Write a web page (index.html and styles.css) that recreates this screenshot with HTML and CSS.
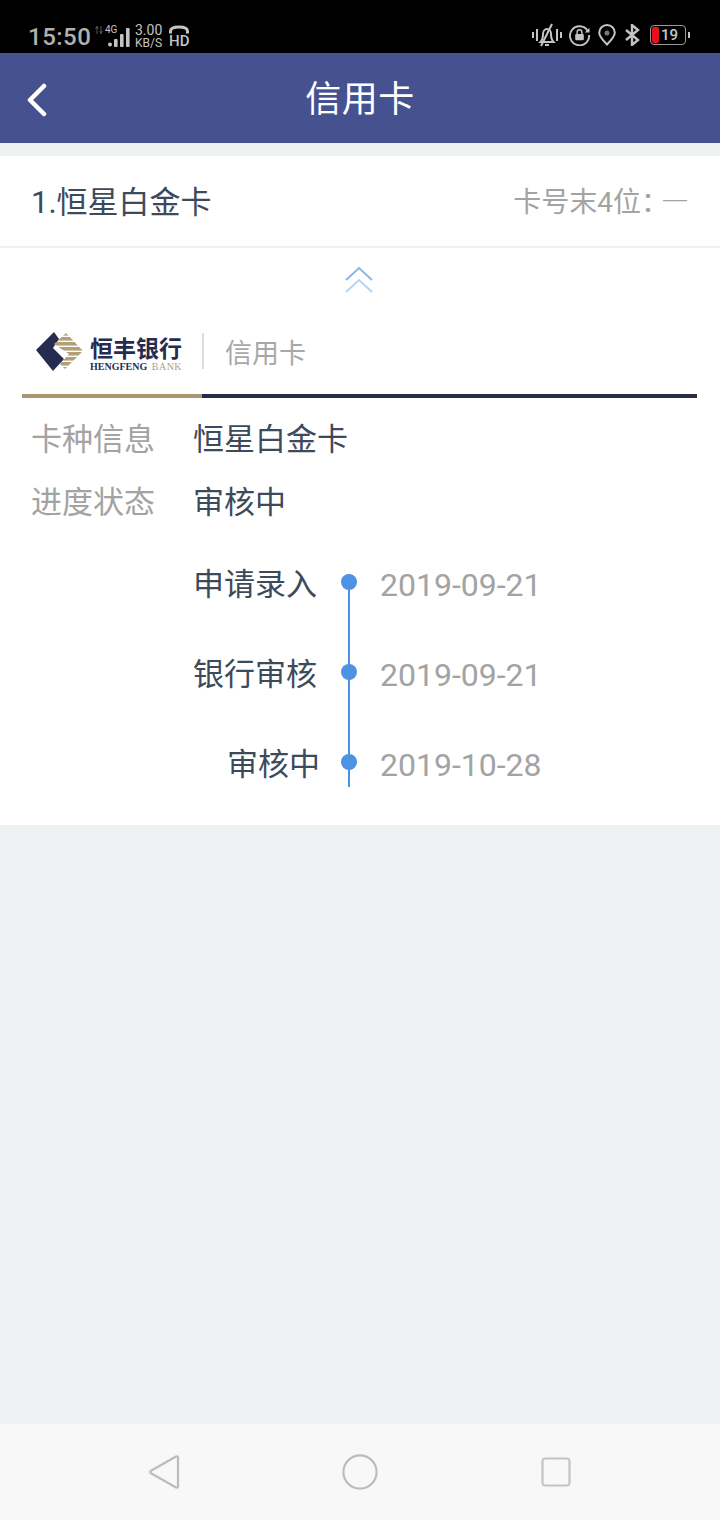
FILE: index.html
```html
<!DOCTYPE html>
<html lang="zh-CN">
<head>
  <meta charset="UTF-8" />
  <title>信用卡</title>
  <link rel="stylesheet" href="styles.css">
</head>
<body>
  <div class="phone">
    <div class="statusbar">
      <div class="status-left">
        <span class="clock">15:50</span>
        <svg class="ic-hold" width="8" height="10" viewBox="0 0 8 10"><path d="M2 1v8M6 1v8M0.5 4L2 1.5 3.5 4M4.5 6L6 8.5 7.5 6" fill="none" stroke="#555" stroke-width="1"/></svg>
        <span class="signal">
          <span class="net">4G</span>
          <svg width="22" height="19" viewBox="0 0 22 19"><g fill="#c4c4c4"><circle cx="2" cy="16.5" r="2"/><rect x="6" y="11" width="3.6" height="8" rx="1"/><rect x="12" y="6" width="3.6" height="13" rx="1"/><rect x="18" y="0" width="3.6" height="19" rx="1"/></g></svg>
        </span>
        <span class="speed"><b>3.00</b><i>KB/S</i></span>
        <span class="hd">
          <svg width="20" height="10" viewBox="0 0 20 10"><path d="M1.5 8.500V6.200C1.500 3.400 5 2 10 2s8.500 1.400 8.500 4.200V8.500" fill="none" stroke="#c4c4c4" stroke-width="3"/></svg>
          <span class="hd-text">HD</span>
        </span>
      </div>
      <div class="status-right">
        <svg class="ic-bell" width="30" height="24" viewBox="0 0 30 24"><g fill="none" stroke="#c4c4c4" stroke-width="2"><path d="M1 9v6M5 6v12M25 6v12M29 9v6"/><path d="M8.500 19c2-2 2.500-4 2.500-8 0-3 2-5 4-5s4 2 4 5c0 4 .5 6 2.500 8z"/><path d="M13 22h4M9 23L20 1"/></g></svg>
        <svg width="21" height="22" viewBox="0 0 22 22"><path d="M19.500 6.500A10 10 0 1 0 21 11" fill="none" stroke="#c4c4c4" stroke-width="2"/><path d="M21.500 3.500v5h-5z" fill="#c4c4c4"/><rect x="6.500" y="10" width="9" height="6.500" rx="1" fill="#c4c4c4"/><path d="M8.500 10V8a2.500 2.500 0 0 1 5 0v2" fill="none" stroke="#c4c4c4" stroke-width="1.500"/></svg>
        <svg width="18" height="22" viewBox="0 0 18 22"><path d="M9 20.500C4 15.500 1.200 12.500 1.200 8.800a7.800 7.800 0 0 1 15.600 0c0 3.700-2.800 6.700-7.800 11.700z" fill="none" stroke="#c4c4c4" stroke-width="2"/><circle cx="9" cy="9" r="2.500" fill="#777"/></svg>
        <svg width="17" height="22" viewBox="0 0 17 22"><path d="M2 6l12 10-6 5V1l6 5L2 16" fill="none" stroke="#c4c4c4" stroke-width="2.400"/></svg>
        <span class="battery">
          <span class="battery-level"></span>
          <span class="battery-num">19</span>
        </span>
      </div>
    </div>

    <header class="topbar">
      <svg class="back" width="22" height="34" viewBox="0 0 22 34"><path d="M19 3L5 17l14 14" fill="none" stroke="#fff" stroke-width="4.500" stroke-linecap="round" stroke-linejoin="round"/></svg>
      <h1>信用卡</h1>
    </header>

    <main class="content">
      <section class="card">
        <div class="card-head">
          <span class="card-name">1.恒星白金卡</span>
          <span class="card-no">卡号末4位：<span class="card-dash">—</span></span>
        </div>
        <div class="collapse">
          <svg width="30" height="28" viewBox="0 0 30 28"><path d="M2 14L15 2l13 12" fill="none" stroke="#8ab8e6" stroke-width="2"/><path d="M2 26l13-12 13 12" fill="none" stroke="#b5d4f1" stroke-width="2"/></svg>
        </div>
        <div class="brand">
          <svg class="brand-mark" width="48" height="39" viewBox="0 0 48 39">
            <defs>
              <pattern id="stripes" width="48" height="5" patternUnits="userSpaceOnUse">
                <rect width="48" height="3.600" fill="#b3a077"/>
              </pattern>
            </defs>
            <path d="M0 18L18 0l5 7-6 9 11 11-11 12z" fill="#252c4f"/>
            <path d="M30 1l17 18-18 18-5-5 9-10-15-10z" fill="url(#stripes)"/>
          </svg>
          <div class="brand-name">
            <strong>恒丰银行</strong>
            <small>HENGFENG <em>BANK</em></small>
          </div>
          <span class="brand-sep"></span>
          <span class="brand-type">信用卡</span>
        </div>
        <div class="rule"><span class="rule-gold"></span><span class="rule-navy"></span></div>
        <div class="info-row">
          <span class="info-key">卡种信息</span>
          <span class="info-val">恒星白金卡</span>
        </div>
        <div class="info-row">
          <span class="info-key">进度状态</span>
          <span class="info-val">审核中</span>
        </div>
        <ul class="timeline">
          <li class="step">
            <span class="step-name">申请录入</span>
            <span class="step-node"></span>
            <span class="step-date">2019-09-21</span>
          </li>
          <li class="step">
            <span class="step-name">银行审核</span>
            <span class="step-node"></span>
            <span class="step-date">2019-09-21</span>
          </li>
          <li class="step last">
            <span class="step-name">审核中</span>
            <span class="step-node"></span>
            <span class="step-date">2019-10-28</span>
          </li>
        </ul>
      </section>
    </main>

    <nav class="navbar">
      <svg width="32" height="36" viewBox="0 0 32 36"><path d="M28 2.500L3 16.800c-1 .6-1 1.800 0 2.400L28 33.500c1 .5 2 0 2-1V3.500c0-1-1-1.500-2-1z" fill="none" stroke="#bcbcbc" stroke-width="2.200"/></svg>
      <svg width="36" height="36" viewBox="0 0 36 36"><circle cx="18" cy="18" r="16.600" fill="none" stroke="#bcbcbc" stroke-width="2.200"/></svg>
      <svg class="nav-recent" width="30" height="30" viewBox="0 0 30 30"><rect x="1.500" y="1.500" width="27" height="27" rx="3" fill="none" stroke="#c4c4c4" stroke-width="2.200"/></svg>
    </nav>
  </div>
</body>
</html>
```

FILE: styles.css
```css
* {
  box-sizing: border-box;
}
body {
  margin: 0;
  font-family: Roboto, "Noto Sans CJK SC", sans-serif;
  background-color: #edf1f2;
}
.phone {
  width: 720px;
  height: 1520px;
  display: flex;
  flex-direction: column;
}

/* status bar */
.statusbar {
  height: 53px;
  background: #000;
  color: #c4c4c4;
  display: flex;
  justify-content: space-between;
  align-items: flex-end;
  padding: 0 34px 3px 28px;
}
.status-left, .status-right {
  display: flex;
  align-items: center;
}
.status-left {
  height: 26px;
}
.clock {
  font-size: 24px;
  font-weight: 500;
  letter-spacing: 0.5px;
  width: 67px;
  color: #b0b0b0;
}
.ic-hold {
  margin-top: -14px;
}
.signal {
  display: flex;
  align-items: flex-end;
  margin-left: 2px;
  height: 22px;
  margin-top: -3px;
  position: relative;
}
.net {
  font-size: 10px;
  line-height: 10px;
  align-self: flex-start;
  position: absolute;
  left: 0;
  top: 0;
}
.signal svg {
  margin-left: 3px;
}
.speed {
  display: flex;
  flex-direction: column;
  margin-left: 5px;
  font-weight: 400;
  width: 30px;
  margin-top: -1px;
}
.speed b {
  font-weight: 400;
  font-size: 14px;
  line-height: 13px;
}
.speed i {
  font-style: normal;
  font-size: 12px;
  line-height: 11px;
  margin-top: 1px;
}
.hd {
  display: flex;
  flex-direction: column;
  margin-left: 4px;
  width: 22px;
  margin-top: -2px;
}
.hd-text {
  font-size: 15px;
  line-height: 13px;
  font-weight: 500;
}
.status-right {
  gap: 8px;
  height: 30px;
}
.ic-bell {
  margin-right: -1px;
}
.battery {
  margin-left: 1px;
  width: 36px;
  height: 20px;
  border: 1px solid #999;
  border-radius: 4px;
  display: flex;
  align-items: center;
  position: relative;
}
.battery::after {
  content: "";
  position: absolute;
  right: -5px;
  top: 6px;
  width: 2px;
  height: 6px;
  background: #c4c4c4;
}
.battery-level {
  width: 7px;
  height: 16px;
  margin-left: 1px;
  background: #e8101c;
  border-radius: 2px;
}
.battery-num {
  font-size: 15px;
  font-weight: 500;
  margin-left: 2px;
  color: #c8c8c8;
}

/* title bar */
.topbar {
  height: 90px;
  flex-shrink: 0;
  background-color: #45528f;
  display: flex;
  align-items: center;
  justify-content: center;
  position: relative;
}
.topbar h1 {
  margin: -4px 0 0;
  font-size: 36px;
  font-weight: 400;
  letter-spacing: 0.5px;
  color: #fff;
}
.back {
  position: absolute;
  left: 25px;
  top: 30px;
}

/* card */
.content {
  flex: 1;
  padding-top: 13px;
}
.card {
  background: white;
  padding-bottom: 38px;
}
.card-head {
  height: 92px;
  padding: 0 31px 2px 31px;
  border-bottom: 2px solid #f0f0f0;
  display: flex;
  justify-content: space-between;
  align-items: center;
}
.card-name {
  font-size: 31px;
  margin-top: -2px;
  color: #3d4a5c;
}
.card-no {
  font-size: 28px;
  color: #a3a3a3;
}
.card-dash {
  font-family: "Noto Sans CJK SC", sans-serif;
  margin-left: -8px;
}
.collapse {
  height: 46px;
  padding-top: 18px;
  display: flex;
  justify-content: center;
}
.collapse svg {
  margin-left: -3px;
}
.brand {
  margin-top: 38px;
  padding-left: 36px;
  height: 38px;
  display: flex;
  align-items: center;
}
.brand-mark {
  flex-shrink: 0;
}
.brand-name {
  margin-left: 6px;
  width: 93px;
  padding-top: 6px;
  display: flex;
  flex-direction: column;
}
.brand-name strong {
  font-size: 23px;
  line-height: 25px;
  font-weight: 700;
  color: #252c4f;
  white-space: nowrap;
}
.brand-name small {
  font-family: "Liberation Serif", serif;
  font-size: 10px;
  line-height: 10px;
  font-weight: 700;
  color: #252c4f;
  white-space: nowrap;
}
.brand-name em {
  font-style: normal;
  font-weight: 400;
  color: #b3a077;
  margin-left: 2px;
  letter-spacing: 0.5px;
}
.brand-sep {
  width: 2px;
  height: 36px;
  margin-left: 19px;
  background: #dcdcdc;
}
.brand-type {
  margin-left: 21px;
  font-size: 27px;
  color: #a8a8a8;
}
.rule {
  margin: 24px 23px 0 22px;
  height: 4px;
  display: flex;
}
.rule-gold {
  width: 180px;
  background: #a8986f;
}
.rule-navy {
  flex: 1;
  background: #272c47;
}
.info-row {
  height: 63px;
  padding-left: 31px;
  display: flex;
  align-items: center;
  font-size: 31px;
}
.rule + .info-row {
  margin-top: 7px;
}
.info-key {
  width: 162px;
  color: #a3a3a3;
}
.info-val {
  color: #3d4a5c;
}

/* progress timeline */
.timeline {
  list-style: none;
  margin: 43px 0 0;
  padding: 0;
}
.step {
  height: 90px;
  display: flex;
  font-size: 31px;
  line-height: 22px;
}
.step.last {
  height: 33px;
}
.step-name {
  width: 320px;
  padding-right: 3px;
  text-align: right;
  color: #3d4a5c;
}
.step.last .step-name {
  padding-right: 0;
}
.step-node {
  width: 16px;
  margin-left: 21px;
  display: flex;
  justify-content: center;
  position: relative;
}
.step-node::before {
  content: "";
  width: 2px;
  background: #4e92e3;
}
.step-node::after {
  content: "";
  position: absolute;
  top: 0;
  left: 0;
  width: 16px;
  height: 16px;
  border-radius: 50%;
  background: #4e92e3;
}
.step-date {
  margin-left: 23px;
  font-size: 32px;
  color: #a3a3a3;
}

/* android nav */
.navbar {
  height: 96px;
  flex-shrink: 0;
  background: #f8f8f8;
  display: flex;
  align-items: center;
  padding-left: 148px;
  gap: 162px;
}
.nav-recent {
  margin-left: 1px;
}
```
